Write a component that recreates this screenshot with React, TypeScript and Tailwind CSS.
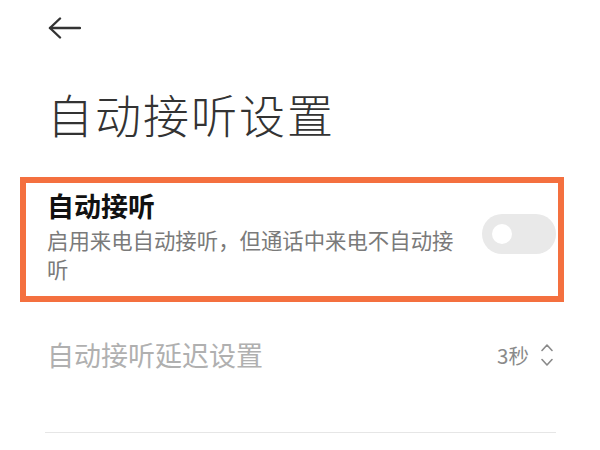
import React from 'react';

const font = { fontFamily: '"Noto Sans CJK SC", "Noto Sans", sans-serif' };

function BackArrow() {
  return (
    <svg width="33" height="22" viewBox="0 0 33 22" fill="none" stroke="#333" strokeWidth="2.4" strokeLinecap="round" strokeLinejoin="round">
      <path d="M2 11 H32" />
      <path d="M12 1.5 L2 11 L12 20.5" />
    </svg>
  );
}

function UpDown() {
  return (
    <svg width="12" height="24" viewBox="0 0 12 24" fill="none" stroke="#8a8a8a" strokeWidth="1.6" strokeLinecap="round" strokeLinejoin="round">
      <path d="M1 7.5 L6 2 L11 7.5" />
      <path d="M1 16.5 L6 22 L11 16.5" />
    </svg>
  );
}

export default function App() {
  return (
    <div className="w-[600px] h-[450px] bg-white overflow-hidden" style={font}>
      <div className="pl-[47px] pr-[44px] pt-[17px]">
        <button className="block ml-[1px]" aria-label="返回">
          <BackArrow />
        </button>

        <h1 className="mt-[46px] text-[46px] leading-[56px] font-light text-[#333] tracking-[2px]">自动接听设置</h1>

        <div className="mt-[36px] ml-[-27px] mr-[-8px] border-[6px] border-[#f4703f] pl-[21px] pr-[2px] pt-[5px] pb-[13px]">
          <div className="flex items-center justify-between">
            <div className="w-[415px]">
              <div className="text-[27px] leading-[36px] font-bold text-[#111]">自动接听</div>
              <div className="mt-[1px] text-[21.4px] leading-[29px] text-[#7a7a7a]">
                启用来电自动接听，但通话中来电不自动接听
              </div>
            </div>
            <div className="w-[74px] h-[40px] rounded-full bg-[#e9e9e9] flex items-center pl-[10px] mb-[4px]">
              <div className="w-[20px] h-[20px] rounded-full bg-white" />
            </div>
          </div>
        </div>

        <div className="mt-[35px] flex items-center justify-between">
          <span className="text-[27px] leading-[36px] text-[#b0b0b0]">自动接听延迟设置</span>
          <div className="flex items-center gap-[12px] pr-[3px]">
            <span className="text-[20.5px] leading-[28px] text-[#8a8a8a]">3秒</span>
            <UpDown />
          </div>
        </div>

        <div className="mt-[59px] ml-[-2px] h-px bg-[#e6e6e6]" />
      </div>
    </div>
  );
}
